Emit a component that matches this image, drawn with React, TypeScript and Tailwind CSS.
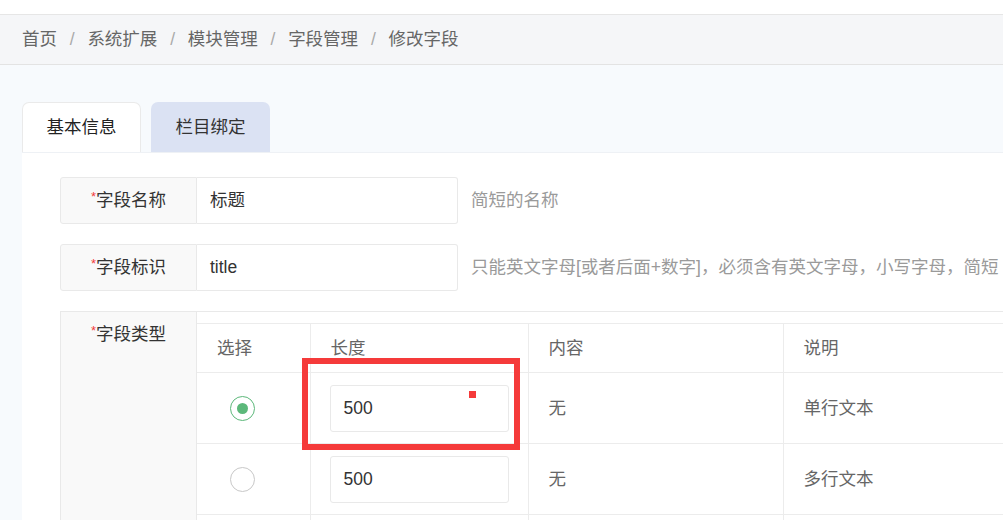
const font = { fontFamily: '"Liberation Sans", "Noto Sans CJK SC", sans-serif' };

const crumbs = ["首页", "系统扩展", "模块管理", "字段管理", "修改字段"];

type Row = { checked: boolean; len: string; content: string; desc: string };

const rows: Row[] = [
  { checked: true, len: "500", content: "无", desc: "单行文本" },
  { checked: false, len: "500", content: "无", desc: "多行文本" },
  { checked: false, len: "", content: "", desc: "" },
];

function Radio({ checked }: { checked: boolean }) {
  return (
    <span
      className={`flex h-[25px] w-[25px] items-center justify-center rounded-full border-[1.5px] bg-white ${
        checked ? "border-[#5cb87a]" : "border-[#c8c8c8]"
      }`}
    >
      {checked && <span className="h-[11px] w-[11px] rounded-full bg-[#5cb87a]" />}
    </span>
  );
}

function FieldRow({ label, value, hint }: { label: string; value: string; hint: string }) {
  return (
    <div className="flex h-[47px] items-stretch">
      <div className="flex w-[137px] justify-center rounded-l-[3px] border border-[#e9e9e9] bg-[#f9f9f9] pt-[10px] text-[17.5px] leading-[24px] text-[#333]">
        <span className="mt-[-3px] text-[13px] text-[#f23b3b]">*</span>
        <span>{label}</span>
      </div>
      <div className="flex w-[261px] items-center rounded-r-[3px] border border-l-0 border-[#e9e9e9] px-[13px] text-[17.5px] text-[#333]">
        {value}
      </div>
      <div className="flex items-center whitespace-nowrap pl-[13px] text-[17.5px] text-[#9a9a9a]">{hint}</div>
    </div>
  );
}

export default function App() {
  return (
    <div className="relative h-[520px] w-full overflow-hidden bg-[#f7fafd]" style={font}>
      <div className="h-[15px] border-b border-[#e6e6e6] bg-white" />

      {/* Breadcrumb */}
      <div className="flex h-[50px] items-center gap-[12.75px] border-b border-[#e3e3e3] bg-[#f5f6f8] px-[22px] text-[17.5px] text-[#666]">
        {crumbs.map((c, i) => (
          <span key={c} className="flex items-center gap-[12.75px]">
            {i > 0 && <span className="text-[#aaa]">/</span>}
            <span>{c}</span>
          </span>
        ))}
      </div>

      <div className="pl-[22px] pt-[37px]">
        {/* Tabs */}
        <div className="flex gap-[10px]">
          <div className="flex h-[50px] w-[119px] items-center justify-center rounded-t-[7px] border border-b-0 border-[#eaeaea] bg-white text-[17.5px] text-[#222]">
            基本信息
          </div>
          <div className="flex h-[50px] w-[119px] items-center justify-center rounded-t-[7px] bg-[#dbe2f3] text-[17.5px] text-[#333]">
            栏目绑定
          </div>
        </div>

        {/* Panel */}
        <div className="flex flex-col gap-[20px] border-t border-[#eef1f5] bg-white pl-[38px] pt-[24px]">
          <FieldRow label="字段名称" value="标题" hint="简短的名称" />
          <FieldRow label="字段标识" value="title" hint="只能英文字母[或者后面+数字]，必须含有英文字母，小写字母，简短" />

          <div className="flex">
            <div className="flex w-[137px] shrink-0 justify-center border border-b-0 border-[#e9e9e9] bg-[#f9f9f9] pt-[10px] text-[17.5px] leading-[24px] text-[#333]">
              <span className="mt-[-3px] text-[13px] text-[#f23b3b]">*</span>
              <span>字段类型</span>
            </div>
            <div className="flex-1 border-t border-[#e9e9e9] pt-[11px]">
              <table className="w-[900px] border-collapse text-[17.5px] text-[#666]">
                <thead>
                  <tr className="h-[49px] border-t border-[#ececec]">
                    <th className="w-[113px] border-r border-[#ececec] pl-[20px] text-left font-normal">选择</th>
                    <th className="w-[218px] border-r border-[#ececec] pl-[20px] text-left font-normal">长度</th>
                    <th className="w-[255px] border-r border-[#ececec] pl-[20px] text-left font-normal">内容</th>
                    <th className="pl-[20px] text-left font-normal">说明</th>
                  </tr>
                </thead>
                <tbody>
                  {rows.map((r, i) => (
                    <tr key={i} className="h-[71px] border-t border-[#ececec]">
                      <td className="border-r border-[#ececec]">
                        <div className="flex pl-[33px]">
                          <Radio checked={r.checked} />
                        </div>
                      </td>
                      <td className="border-r border-[#ececec] px-[19px]">
                        <div className="flex h-[47px] items-center rounded-[3px] border border-[#e9e9e9] px-[13px] text-[#333]">
                          {r.len}
                        </div>
                      </td>
                      <td className="border-r border-[#ececec] pl-[20px]">{r.content}</td>
                      <td className="pl-[20px]">{r.desc}</td>
                    </tr>
                  ))}
                </tbody>
              </table>
            </div>
          </div>
        </div>
      </div>

      {/* Annotation overlay */}
      <div className="absolute left-[302px] top-[358px] h-[92px] w-[218px] border-[6px] border-[#f53a3a]" />
      <div className="absolute left-[469px] top-[391px] h-[7px] w-[7px] bg-[#f53a3a]" />
    </div>
  );
}
